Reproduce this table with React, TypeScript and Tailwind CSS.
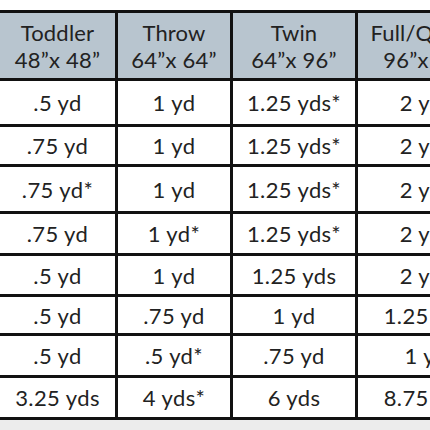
import React from 'react';

const headers = [
  ['Toddler', '48”x 48”'],
  ['Throw', '64”x 64”'],
  ['Twin', '64”x 96”'],
  ['Full/Queen', '96”x 96”'],
];

const rows = [
  ['.5 yd', '1 yd', '1.25 yds*', '2 yds'],
  ['.75 yd', '1 yd', '1.25 yds*', '2 yds'],
  ['.75 yd*', '1 yd', '1.25 yds*', '2 yds'],
  ['.75 yd', '1 yd*', '1.25 yds*', '2 yds'],
  ['.5 yd', '1 yd', '1.25 yds', '2 yds'],
  ['.5 yd', '.75 yd', '1 yd', '1.25 yds'],
  ['.5 yd', '.5 yd*', '.75 yd', '1 yd'],
  ['3.25 yds', '4 yds*', '6 yds', '8.75 yds'],
];

export default function App() {
  return (
    <div className="w-[430px] h-[430px] overflow-hidden bg-white pt-[10px] font-['Lato',sans-serif] text-[#222]">
      <div className="-ml-[3px] w-max grid grid-cols-[115px_112px_122px_136px] grid-rows-[65px_43px_37px_44px_39px_38px_36px_39px_39px] gap-[3px] p-[3px] bg-[#111]">
        {headers.map(([name, size]) => (
          <div
            key={name}
            className="bg-[#b8c5cf] flex flex-col items-center justify-center text-[22px] leading-[27px] tracking-[0.2px]"
          >
            <span>{name}</span>
            <span>{size}</span>
          </div>
        ))}
        {rows.map((row, i) =>
          row.map((cell, j) => (
            <div
              key={i + '-' + j}
              className="bg-white flex items-center justify-center text-[22px] tracking-[0.4px] whitespace-nowrap"
            >
              {cell}
            </div>
          ))
        )}
      </div>
      <div className="h-[10px] bg-[#ececec]" />
    </div>
  );
}
